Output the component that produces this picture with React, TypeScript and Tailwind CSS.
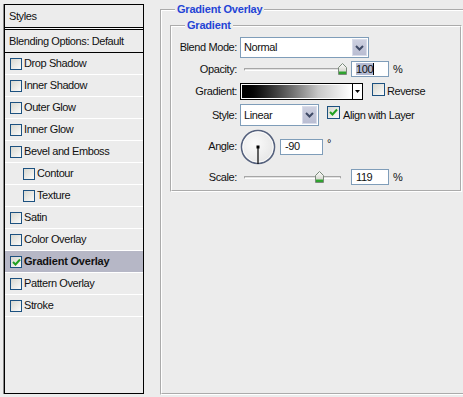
import React from "react";

const Chevron = () => (
  <svg width="9" height="6" viewBox="0 0 9 6">
    <polyline points="1,1 4.5,4.5 8,1" fill="none" stroke="#3f4a66" strokeWidth="2" />
  </svg>
);

const Check = () => (
  <svg width="11" height="11" viewBox="0 0 11 11" className="absolute left-[0px] top-[0px]">
    <polyline points="2,5 4.5,7.5 9,2.5" fill="none" stroke="#21a121" strokeWidth="2" />
  </svg>
);

function Box({ checked = false, size = 12 }: { checked?: boolean; size?: number }) {
  return (
    <span
      className={
        "relative inline-block shrink-0 border border-[#1c5180] bg-gradient-to-br from-[#d8d8d0] to-[#fbfbfb] " +
        (size === 13 ? "w-[13px] h-[13px]" : "w-[12px] h-[12px]")
      }
    >
      {checked && <Check />}
    </span>
  );
}

function Select({ value, width }: { value: string; width: string }) {
  return (
    <div className={"flex h-full border border-[#7f9db9] bg-white " + width}>
      <div className="flex-1 pl-[3px] flex items-center">{value}</div>
      <div className="w-[15px] m-[1px] flex items-center justify-center bg-gradient-to-b from-[#cdd0e0] to-[#b9bdd2] border border-[#d8dcea]">
        <Chevron />
      </div>
    </div>
  );
}

function Thumb() {
  return (
    <svg width="9" height="12" viewBox="0 0 9 12">
      <defs>
        <linearGradient id="tg" x1="0" y1="0" x2="0" y2="1">
          <stop offset="0" stopColor="#ffffff" />
          <stop offset="0.6" stopColor="#dcdcd6" />
        </linearGradient>
      </defs>
      <polygon points="0.5,4.5 4.5,0.5 8.5,4.5 8.5,11.5 0.5,11.5" fill="url(#tg)" stroke="#7a8a7a" />
      <rect x="1" y="8.5" width="7" height="2.5" fill="#2fa32f" />
    </svg>
  );
}

function Slider({ pos }: { pos: number }) {
  return (
    <div className="relative w-[107px] h-full">
      <div className="absolute left-[4px] right-[6px] top-[7px] h-[3px] border border-[#a6a6a6] border-b-white bg-[#e2e2e2] rounded-[1px]" />
      <div className="absolute top-[2px]" style={{ left: pos }}>
        <Thumb />
      </div>
    </div>
  );
}

function NumInput({ value, selected = false, width = "w-[38px]" }: { value: string; selected?: boolean; width?: string }) {
  return (
    <div className={"h-full border border-[#7f9db9] bg-white flex items-center pl-[4px] " + width}>
      {selected ? (
        <>
          <span className="bg-[#b4bbd3] leading-[12px]">{value}</span>
          <span className="w-[1px] h-[12px] bg-black" />
        </>
      ) : (
        value
      )}
    </div>
  );
}

const Label = ({ children }: { children: React.ReactNode }) => (
  <div className="w-[65px] text-right shrink-0 mr-[3px]">{children}</div>
);

export default function App() {
  const rows: { name: string; indent?: boolean; selected?: boolean }[] = [
    { name: "Drop Shadow" },
    { name: "Inner Shadow" },
    { name: "Outer Glow" },
    { name: "Inner Glow" },
    { name: "Bevel and Emboss" },
    { name: "Contour", indent: true },
    { name: "Texture", indent: true },
    { name: "Satin" },
    { name: "Color Overlay" },
    { name: "Gradient Overlay", selected: true },
    { name: "Pattern Overlay" },
    { name: "Stroke" },
  ];

  return (
    <div className="w-[463px] h-[397px] overflow-hidden bg-[#ececec] flex items-start pt-[4px] pl-[4px] text-[11px] text-[#111] tracking-[-0.4px] font-['Liberation_Sans',Arial,sans-serif]">
      {/* Left styles list */}
      <div className="w-[140px] h-[390px] shrink-0 border border-black shadow-[-1px_0_0_#8a8a8a] bg-[#ececec] flex flex-col">
        <div className="h-[23px] border-b border-black flex items-center pl-[4px]">Styles</div>
        <div className="h-[1px] bg-[#f6f6f6]" />
        <div className="h-[24px] border-y border-black flex items-center pl-[4px]">Blending Options: Default</div>
        {rows.map((r) => (
          <div
            key={r.name}
            className={
              "h-[22px] border-b border-white flex items-center gap-[2px] " +
              (r.indent ? "pl-[18px] " : "pl-[5px] ") +
              (r.selected ? "bg-[#b6b7c6] font-bold" : "")
            }
          >
            <Box checked={r.selected} />
            <span className={r.selected ? "tracking-[-0.2px]" : ""}>{r.name}</span>
          </div>
        ))}
      </div>

      {/* Right panel */}
      <fieldset className="ml-[16px] mt-[-1px] w-[330px] h-[392px] border-2 [border-style:groove] border-white shrink-0 px-0 pb-0">
        <legend className="ml-[13px] px-[2px] font-bold text-[#2444d6] leading-[13px] tracking-[-0.2px]">Gradient Overlay</legend>
        <fieldset className="ml-[8px] mt-[3px] w-[292px] border-2 [border-style:groove] border-white px-0 pb-[5px]">
          <legend className="ml-[13px] px-[2px] font-bold text-[#2444d6] leading-[13px] tracking-[-0.2px]">Gradient</legend>
          <div className="pt-[5px] flex flex-col">
            <div className="h-[21px] flex items-center">
              <Label>Blend Mode:</Label>
              <Select value="Normal" width="w-[129px]" />
            </div>
            <div className="h-[16px] mt-[3px] flex items-center">
              <Label>Opacity:</Label>
              <Slider pos={98} />
              <div className="ml-[4px] h-full">
                <NumInput value="100" selected />
              </div>
              <span className="ml-[4px]">%</span>
            </div>
            <div className="h-[17px] mt-[6px] flex items-center">
              <Label>Gradient:</Label>
              <div className="w-[123px] h-full border border-black flex bg-white">
                <div className="flex-1 m-[1px] bg-gradient-to-r from-black via-[#c8c8c8] via-70% to-white" />
                <div className="w-[10px] border-l border-black flex items-center justify-center">
                  <svg width="5" height="3" viewBox="0 0 5 3">
                    <polygon points="0,0 5,0 2.5,3" fill="#000" />
                  </svg>
                </div>
              </div>
              <div className="ml-[9px]">
                <Box size={13} />
              </div>
              <span className="ml-[2px]">Reverse</span>
            </div>
            <div className="h-[22px] mt-[4px] flex items-center">
              <Label>Style:</Label>
              <Select value="Linear" width="w-[79px]" />
              <div className="ml-[8px]">
                <Box size={13} checked />
              </div>
              <span className="ml-[3px]">Align with Layer</span>
            </div>
            <div className="h-[35px] mt-[3px] flex items-center">
              <Label>Angle:</Label>
              <svg width="36" height="36" viewBox="0 0 36 36" className="shrink-0">
                <defs>
                  <radialGradient id="dg" cx="0.4" cy="0.4" r="0.7">
                    <stop offset="0" stopColor="#fbfbfb" />
                    <stop offset="1" stopColor="#e4e4e4" />
                  </radialGradient>
                </defs>
                <circle cx="18" cy="18" r="16.5" fill="url(#dg)" stroke="#56627e" strokeWidth="1.6" />
                <circle cx="18" cy="18" r="15.2" fill="none" stroke="#ffffff" strokeWidth="0.8" />
                <line x1="18" y1="18" x2="18" y2="35" stroke="#000" strokeWidth="1.2" />
                <rect x="16.5" y="16.5" width="3" height="3" fill="#000" />
              </svg>
              <div className="ml-[4px] h-[16px]">
                <NumInput value="-90" width="w-[43px]" />
              </div>
              <span className="ml-[4px] self-start mt-[9px] leading-[10px]">°</span>
            </div>
            <div className="h-[16px] mt-[5px] flex items-center">
              <Label>Scale:</Label>
              <Slider pos={75} />
              <div className="ml-[4px] h-full">
                <NumInput value="119" />
              </div>
              <span className="ml-[4px]">%</span>
            </div>
          </div>
        </fieldset>
      </fieldset>
    </div>
  );
}
